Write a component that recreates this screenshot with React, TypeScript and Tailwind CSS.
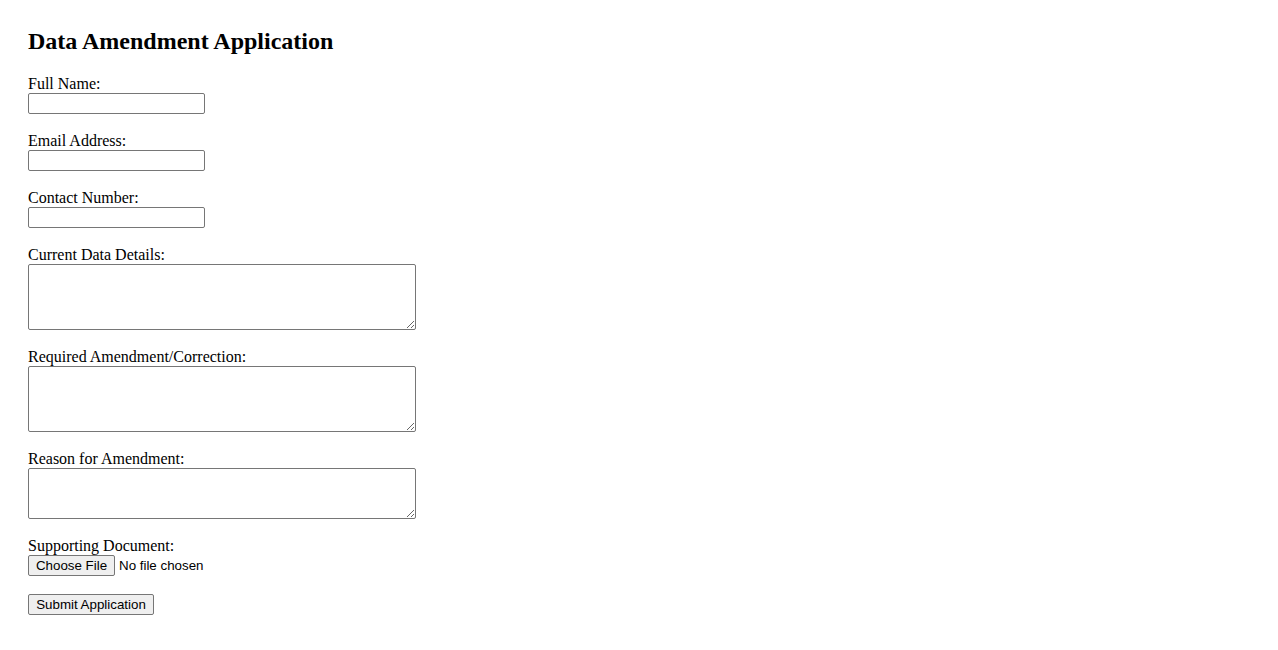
import { useState } from "react";

type Field = {
  id: string;
  label: string;
  kind: "input" | "textarea";
  type?: string;
  height?: string;
};

const fields: Field[] = [
  { id: "fullName", label: "Full Name:", kind: "input", type: "text" },
  { id: "email", label: "Email Address:", kind: "input", type: "email" },
  { id: "contact", label: "Contact Number:", kind: "input", type: "tel" },
  { id: "currentData", label: "Current Data Details:", kind: "textarea", height: "h-[66px]" },
  { id: "amendment", label: "Required Amendment/Correction:", kind: "textarea", height: "h-[66px]" },
  { id: "reason", label: "Reason for Amendment:", kind: "textarea", height: "h-[51px]" },
];

const controlBase =
  "block border border-[#767676] rounded-[2px] bg-white text-[13.33px] text-black outline-none focus:border-[#101010]";

export default function App() {
  const [fileName, setFileName] = useState("");

  return (
    <div className="min-h-screen bg-white px-[28px] pt-[28px] font-['Liberation_Serif',serif] text-black">
      <h2 className="text-[24px] font-bold leading-[27px]">Data Amendment Application</h2>

      <form className="mt-[20px] flex flex-col gap-[18px]" onSubmit={(e) => e.preventDefault()}>
        {fields.map((f) => (
          <div key={f.id}>
            <label htmlFor={f.id} className="block text-[16px] leading-[18px]">
              {f.label}
            </label>
            {f.kind === "input" ? (
              <input
                id={f.id}
                name={f.id}
                type={f.type}
                className={`${controlBase} h-[21px] w-[177px] px-[2px] font-['Liberation_Sans',sans-serif]`}
              />
            ) : (
              <textarea
                id={f.id}
                name={f.id}
                className={`${controlBase} ${f.height} w-[388px] px-[2px] py-[2px] font-['Liberation_Mono',monospace]`}
              />
            )}
          </div>
        ))}

        <div>
          <label htmlFor="doc" className="block text-[16px] leading-[18px]">
            Supporting Document:
          </label>
          <div className="flex h-[21px] items-center font-['Liberation_Sans',sans-serif] text-[13.33px]">
            <label
              htmlFor="doc"
              className="flex h-[21px] w-[87px] cursor-default items-center justify-center rounded-[2px] border border-[#767676] bg-[#efefef] text-black hover:bg-[#e5e5e5]"
            >
              Choose File
            </label>
            <span className="ml-[4px]">{fileName || "No file chosen"}</span>
            <input
              id="doc"
              name="doc"
              type="file"
              className="hidden"
              onChange={(e) => setFileName(e.target.files?.[0]?.name ?? "")}
            />
          </div>
        </div>

        <div>
          <button
            type="submit"
            className="flex h-[21px] w-[126px] items-center justify-center rounded-[2px] border border-[#767676] bg-[#efefef] font-['Liberation_Sans',sans-serif] text-[13.33px] text-black hover:bg-[#e5e5e5]"
          >
            Submit Application
          </button>
        </div>
      </form>
    </div>
  );
}
